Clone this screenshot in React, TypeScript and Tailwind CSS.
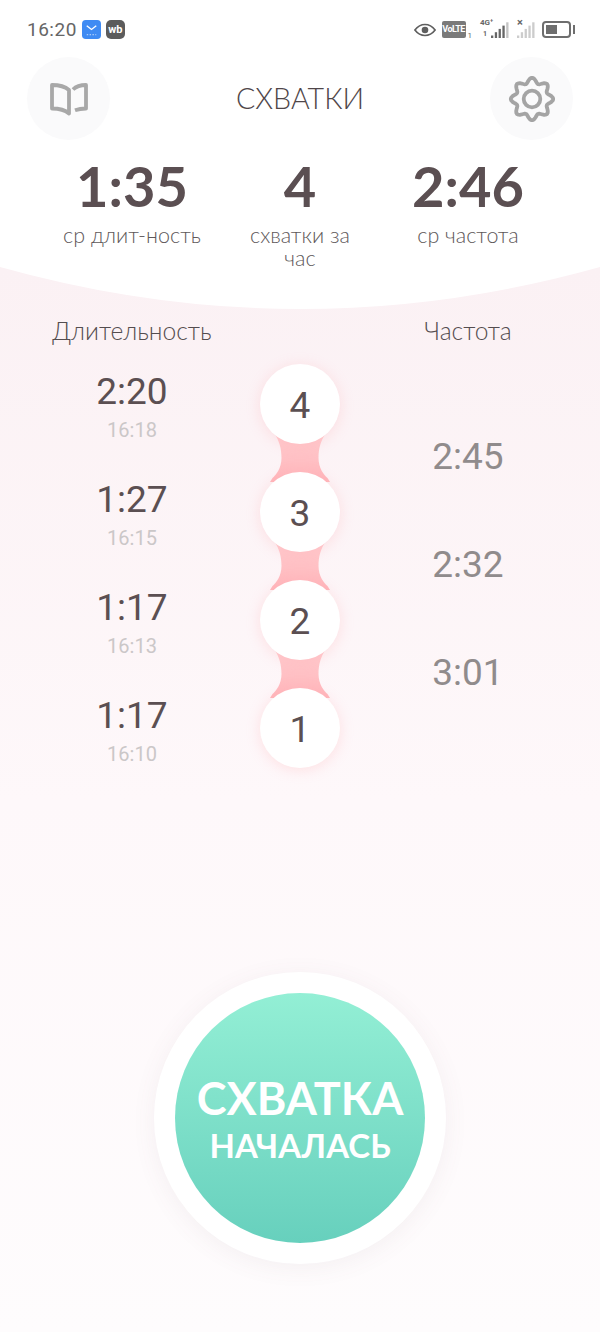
import React from 'react';

const gearPath = (() => {
  const pts: string[] = [];
  for (let i = 0; i < 96; i++) {
    const a = (i / 96) * Math.PI * 2 - Math.PI / 2;
    const r = 18.6 + 2.6 * Math.cos(8 * (a + Math.PI / 2));
    pts.push(`${(24 + r * Math.cos(a)).toFixed(2)} ${(24 + r * Math.sin(a)).toFixed(2)}`);
  }
  return `M${pts.join('L')}Z`;
})();

const durations = [
  { value: '2:20', at: '16:18', n: 4 },
  { value: '1:27', at: '16:15', n: 3 },
  { value: '1:17', at: '16:13', n: 2 },
  { value: '1:17', at: '16:10', n: 1 },
];
const gaps = ['2:45', '2:32', '3:01'];

const Bars = ({ color, faded }: { color: string; faded?: string }) => (
  <svg width="20" height="18" viewBox="0 0 20 18">
    {[0, 1, 2, 3, 4].map((i) => (
      <rect key={i} x={1 + i * 3.8} y={14.5 - i * 3.3} width="2.3" height={2.5 + i * 3.3} fill={i > 3 && faded ? faded : color} />
    ))}
  </svg>
);

const StatusBar = () => (
  <div className="flex h-[57px] items-center justify-between pl-[27px] pr-[25px] pt-[2px]">
    <div className="flex items-center gap-[5px] font-['Roboto',sans-serif]">
      <span className="text-[19px] leading-none text-[#666666] tracking-[0.5px]">16:20</span>
      <svg width="19" height="19" viewBox="0 0 20 20">
        <rect width="20" height="20" rx="4" fill="#3f8bf3" />
        <path d="M5 6l5 4 5-4" fill="none" stroke="#fff" strokeWidth="1.4" />
        <path d="M5 15.5h10" stroke="#cfe2fc" strokeWidth="1" strokeDasharray="1.5 1.5" />
      </svg>
      <div className="flex h-[19px] w-[19px] items-center justify-center rounded-[5px] bg-[#5c5c5c] text-[11px] font-bold leading-none text-white">
        wb
      </div>
    </div>
    <div className="flex items-center font-['Roboto',sans-serif]">
      <svg width="22" height="14" viewBox="0 0 24 14" className="mr-[6px]">
        <path d="M1 7c3-4 7-6 11-6s8 2 11 6c-3 4-7 6-11 6S4 11 1 7z" fill="none" stroke="#5e5e5e" strokeWidth="1.8" />
        <circle cx="12" cy="7" r="3.6" fill="#5e5e5e" />
      </svg>
      <div className="flex h-[17px] w-[24px] items-center justify-center overflow-hidden rounded-[2px] bg-[#7a7a7a] text-[9px] font-bold leading-none tracking-[-0.6px] text-white">
        VoLTE
      </div>
      <span className="ml-[2px] mt-[12px] text-[8px] leading-none text-[#666666]">1</span>
      <div className="relative ml-[8px] flex h-[18px] w-[30px] justify-end">
        <span className="absolute left-0 top-[-2px] text-[8px] font-bold leading-none text-[#666666]">4G⁺</span>
        <span className="absolute left-[3px] bottom-[1px] text-[7px] font-bold leading-none text-[#666666]">1</span>
        <Bars color="#666666" faded="#c4c4c4" />
      </div>
      <div className="relative ml-[6px] h-[18px] w-[20px]">
        <span className="absolute left-[1px] top-[-4px] text-[11px] font-bold leading-none text-[#666666]">×</span>
        <Bars color="#cccccc" />
      </div>
      <div className="ml-[6px] flex h-[17px] w-[29px] items-center rounded-[4px] border-2 border-[#6e6e6e] p-[2px]">
        <div className="h-full w-[11px] bg-[#6e6e6e]" />
      </div>
      <div className="ml-[2px] h-[9px] w-[2px] bg-[#6e6e6e]" />
    </div>
  </div>
);

const TopBar = () => (
  <div className="flex items-center justify-between px-[27px]">
    <button className="flex h-[83px] w-[83px] items-center justify-center rounded-full bg-[#fafafb]">
      <svg width="38" height="34" viewBox="0 0 38 34" fill="none" stroke="#a8a8a8" strokeWidth="3.8">
        <path d="M19 8C15 4.500 8 3 2 3v23.500c6 0 13 1.500 17 5z" strokeLinejoin="round" />
        <path d="M23 7.500C26 4.500 31 3 36 3v23.500c-3.500 0-7.500.5-11 1.800" strokeLinejoin="round" />
      </svg>
    </button>
    <h1 className="text-[28.6px] font-light leading-none text-[#4f4649]">СХВАТКИ</h1>
    <button className="flex h-[83px] w-[83px] items-center justify-center rounded-full bg-[#fafafb]">
      <svg width="48" height="48" viewBox="0 0 48 48" fill="none" stroke="#a4a4a4">
        <path d={gearPath} strokeWidth="3.8" strokeLinejoin="round" />
        <circle cx="24" cy="24" r="8.300" strokeWidth="3.800" />
      </svg>
    </button>
  </div>
);

const Stat = ({ value, label }: { value: string; label: string }) => (
  <div className="flex flex-col items-center text-center">
    <div className="text-[56px] font-bold leading-[64px] text-[#5b4f52]">{value}</div>
    <div className="mt-[6px] whitespace-pre-line text-[21.5px] font-light leading-[23px] text-[#5e585a]">{label}</div>
  </div>
);

const Connector = () => (
  <svg width="64" height="56" viewBox="0 0 64 56" className="my-[-14px] shrink-0">
    <defs>
      <linearGradient id="neck" x1="0" y1="0" x2="0" y2="1">
        <stop offset="0" stopColor="#ffcdd0" />
        <stop offset="1" stopColor="#ffb5ba" />
      </linearGradient>
    </defs>
    <path
      d="M6 2L9 8C11 12 13.500 18 13.500 28C13.500 38 8 45 4.500 48L2 52H62L59.500 48C56 45 50.500 38 50.500 28C50.500 18 53 12 55 8L58 2Z"
      fill="url(#neck)"
    />
  </svg>
);

const Timeline = () => (
  <div className="grid grid-cols-3 px-12">
    <div className="flex flex-col items-center">
      <div className="h-[61px] whitespace-nowrap pt-[8px] text-center text-[24.6px] font-light leading-[28px] text-[#544d4f]">Длительность</div>
      {durations.map((d, i) => (
        <div key={i} className="flex h-[108px] w-full flex-col items-center font-['Roboto',sans-serif]">
          <div className="text-[37px] leading-[44px] text-[#5b4f52]">{d.value}</div>
          <div className="mt-[4px] text-[20px] leading-[24px] text-[#cbc7c8]">{d.at}</div>
        </div>
      ))}
    </div>
    <div className="flex flex-col items-center pt-[55px] font-['Roboto',sans-serif]">
      {durations.map((d, i) => (
        <React.Fragment key={d.n}>
          {i > 0 && <Connector />}
          <div className="relative z-10 flex h-[80px] w-[80px] shrink-0 items-center justify-center rounded-full bg-white pt-[3px] text-[37px] text-[#5b4f52] shadow-[0_2px_14px_rgba(255,170,175,0.3)]">
            {d.n}
          </div>
        </React.Fragment>
      ))}
    </div>
    <div className="flex flex-col">
      <div className="h-[61px] pt-[8px] text-center text-[24.6px] font-light leading-[28px] text-[#544d4f]">Частота</div>
      <div className="flex flex-col pt-[65px] font-['Roboto',sans-serif]">
        {gaps.map((g) => (
          <div key={g} className="flex h-[108px] justify-center text-[37px] leading-[44px] text-[#908b8c]">
            {g}
          </div>
        ))}
      </div>
    </div>
  </div>
);

export default function App() {
  return (
    <div className="flex h-[1332px] w-[600px] flex-col overflow-hidden bg-white font-['Lato','Noto_Sans',sans-serif]">
      <header className="h-[267px] bg-white">
        <StatusBar />
        <TopBar />
        <div className="mt-[14px] grid grid-cols-3 px-12">
          <Stat value="1:35" label="ср длит-ность" />
          <Stat value="4" label={'схватки за\nчас'} />
          <Stat value="2:46" label="ср частота" />
        </div>
      </header>
      <main className="relative flex flex-1 flex-col bg-gradient-to-b from-[#fbf1f4] via-[#fef8fa] to-[#fefcfd]">
        <svg width="600" height="42" viewBox="0 0 600 42" className="absolute left-0 top-0">
          <path d="M0 0H600Q300 84 0 0Z" fill="#fff" />
        </svg>
        <div className="relative pt-[42px]">
          <Timeline />
        </div>
        <div className="flex flex-1 items-start justify-center pt-[170px]">
          <button className="flex h-[292px] w-[292px] items-center justify-center rounded-full bg-white shadow-[0_4px_24px_rgba(120,90,100,0.07)]">
            <span className="flex h-[250px] w-[250px] flex-col items-center justify-center rounded-full bg-gradient-to-b from-[#93efd5] to-[#67d0bd] pt-[4px] text-white">
              <span className="text-[45px] font-bold leading-[50px]">СХВАТКА</span>
              <span className="text-[33px] font-bold leading-[44px]">НАЧАЛАСЬ</span>
            </span>
          </button>
        </div>
      </main>
    </div>
  );
}
